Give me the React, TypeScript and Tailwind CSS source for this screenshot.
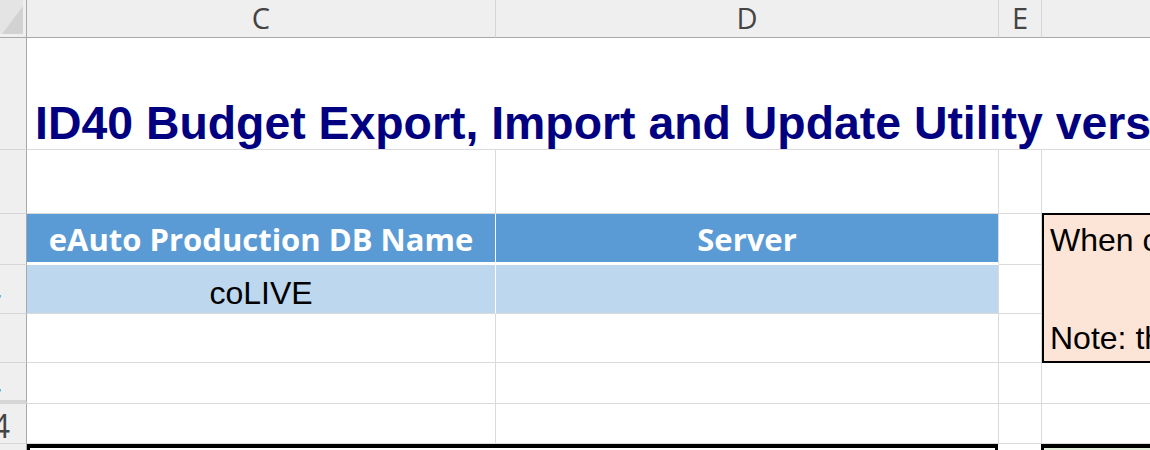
const grid = 'border-r border-b border-[#dadada]';
const rowHead = 'bg-[#efefef] border-r border-r-[#a8a8a8] border-b border-b-[#d6d6d6] overflow-hidden flex items-center justify-end';
const colHead = 'bg-[#efefef] border-b border-b-[#a8a8a8] border-r border-r-[#d6d6d6] flex items-center justify-center pb-[2px] text-[29px] leading-[34px] text-[#444] font-["Open_Sans",sans-serif]';

function RowNum({ n, blue, right }: { n: string; blue?: boolean; right: string }) {
  return (
    <span
      className={`whitespace-nowrap text-[32px] leading-none font-["Open_Sans",sans-serif] ${right} ${
        blue ? 'text-[#2f7fd0]' : 'text-[#444]'
      }`}
    >
      {n}
    </span>
  );
}

export default function App() {
  return (
    <div className="w-[1150px] h-[450px] overflow-hidden bg-white">
      <div className="grid grid-cols-[27px_469px_503px_43px_420px] grid-rows-[38px_112px_64px_51px_49px_49px_41px_40px_60px]">
        {/* column header row */}
        <div className="bg-[#efefef] border-r border-r-[#a8a8a8] border-b border-b-[#a8a8a8]">
          <svg width="23" height="34" viewBox="0 0 23 34">
            <rect width="23" height="34" fill="#e4e4e4" />
            <polygon points="23,6 23,34 2,34" fill="#d2d2d2" />
          </svg>
        </div>
        <div className={colHead}>C</div>
        <div className={colHead}>D</div>
        <div className={colHead}>E</div>
        <div className={`${colHead} border-r-0`} />

        {/* row 1 - title */}
        <div className={rowHead} />
        <div className="col-span-4 border-b border-[#dadada] flex items-end pl-[8px]">
          <span className='whitespace-nowrap text-[46.4px] leading-[51px] font-bold text-[#000080] font-["Liberation_Sans",Arial,sans-serif]'>
            ID40 Budget Export, Import and Update Utility version 4.0
          </span>
        </div>

        {/* row 2 */}
        <div className={rowHead} />
        <div className={grid} />
        <div className={grid} />
        <div className={grid} />
        <div className={grid} />

        {/* row 3 - table header */}
        <div className={rowHead} />
        <div className='bg-[#5b9bd5] border-r border-r-white border-b-[3px] border-b-white flex items-center justify-center pt-[3px] text-[31px] leading-none font-bold text-white font-["Open_Sans",sans-serif]'>
          eAuto Production DB Name
        </div>
        <div className='bg-[#5b9bd5] border-r border-r-[#dadada] border-b-[3px] border-b-white flex items-center justify-center pt-[3px] text-[31px] leading-none font-bold text-white font-["Open_Sans",sans-serif]'>
          Server
        </div>
        <div className={grid} />
        <div className='row-span-3 -mt-px bg-[#fce4d6] border-2 border-black pl-[6px] pt-px overflow-hidden font-["Liberation_Sans",Arial,sans-serif] text-[32px] leading-[49px] text-black whitespace-nowrap'>
          <div>When copying budgets to a new database, update the server name first.</div>
          <div>&nbsp;</div>
          <div>Note: the import will overwrite existing budget rows.</div>
        </div>

        {/* row 4 - values */}
        <div className={rowHead}>
          <RowNum n="4" blue right="mr-[25px] mt-[4px]" />
        </div>
        <div className='bg-[#bdd7ee] border-r border-r-white border-b border-b-[#dadada] flex items-end justify-center pb-[3px] text-[32px] leading-[34px] text-black font-["Liberation_Sans",Arial,sans-serif]'>
          coLIVE
        </div>
        <div className="bg-[#bdd7ee] border-r border-r-[#dadada] border-b border-b-[#dadada]" />
        <div className={grid} />

        {/* row 5 */}
        <div className={rowHead} />
        <div className={grid} />
        <div className={grid} />
        <div className={grid} />

        {/* row 6 */}
        <div className={`${rowHead} border-b-[4px] border-b-[#d6d6d6]`}>
          <RowNum n="4" blue right="mr-[25px] mt-[6px]" />
        </div>
        <div className={grid} />
        <div className={grid} />
        <div className={grid} />
        <div className={grid} />

        {/* row 7 */}
        <div className={rowHead}>
          <RowNum n="4" right="mr-[16px] mt-[4px]" />
        </div>
        <div className={grid} />
        <div className={grid} />
        <div className={grid} />
        <div className={grid} />

        {/* row 8 - bordered blocks */}
        <div className={rowHead} />
        <div className="col-span-2 border-t-4 border-l-[3px] border-r-[3px] border-black mr-[1px]" />
        <div className={grid} />
        <div className="bg-[#e2efda] border-t-4 border-l-[3px] border-black -ml-px" />
      </div>
    </div>
  );
}
